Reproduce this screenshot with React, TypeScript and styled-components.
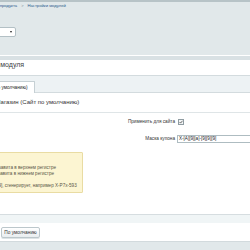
import React from 'react';
import styled, { createGlobalStyle } from 'styled-components';

const GlobalStyle = createGlobalStyle`
  html, body {
    margin: 0;
    padding: 0;
    background: #ffffff;
    overflow: hidden;
  }
  body {
    font-family: "Liberation Sans", Arial, sans-serif;
    color: #333333;
  }
`;

const Page = styled.div`
  width: 250px;
  height: 250px;
  overflow: hidden;
  display: flex;
  flex-direction: column;
`;

const Header = styled.div`
  height: 56px;
  box-sizing: border-box;
  border-top: 2px solid #b7c3c7;
  border-bottom: 1px solid #ffffff;
  background: #e1e8ea;
  padding-top: 1px;
  display: flex;
  flex-direction: column;
`;

const HeaderEdge = styled.div`
  height: 4px;
  background: #d9e1e4;
`;

const Breadcrumbs = styled.div<{ $shift: number }>`
  margin-left: ${(p) => -p.$shift}px;
  display: flex;
  align-items: center;
  gap: 4px;
  font-size: 4.2px;
  line-height: 6px;
  white-space: nowrap;
  color: #2f5d8e;
`;

const Crumb = styled.span``;

const CrumbSep = styled.span`
  color: #7d8d96;
  font-size: 4px;
`;

const ModuleSelect = styled.div`
  margin-top: 18px;
  margin-left: -30px;
  width: 46px;
  height: 10px;
  box-sizing: border-box;
  background: #ffffff;
  border: 1px solid #b3c0c5;
  border-radius: 2px;
  display: flex;
  align-items: center;
  justify-content: flex-end;
  padding-right: 3px;
`;

const Arrow = styled.span`
  width: 0;
  height: 0;
  border-left: 1.5px solid transparent;
  border-right: 1.5px solid transparent;
  border-top: 2px solid #222;
`;

const TitleBar = styled.div<{ $shift: number }>`
  height: 15px;
  margin-left: ${(p) => -p.$shift}px;
  font-size: 7px;
  line-height: 9px;
  color: #3d4246;
  white-space: nowrap;
`;

const TabsBand = styled.div`
  height: 18px;
  box-sizing: border-box;
  border-top: 1px solid #d3dbde;
  border-bottom: 1px solid #d3dbde;
  background: #edf2f4;
  display: flex;
  align-items: flex-end;
`;

const Tab = styled.div<{ $shift: number }>`
  margin-left: ${(p) => -p.$shift}px;
  margin-bottom: -1px;
  width: 80px;
  height: 12px;
  box-sizing: border-box;
  background: #ffffff;
  border: 1px solid #c6d0d4;
  border-bottom: none;
  border-radius: 1px 1px 0 0;
  padding-left: 6px;
  font-size: 4.7px;
  line-height: 11px;
  white-space: nowrap;
  color: #222;
`;

const SectionHeading = styled.div<{ $shift: number }>`
  height: 20px;
  box-sizing: border-box;
  border-bottom: 1px solid #dfe5e7;
  font-size: 6px;
  line-height: 19px;
  white-space: nowrap;
  color: #333;
  text-indent: ${(p) => -p.$shift}px;
`;

const FormGrid = styled.div`
  display: grid;
  grid-template-columns: 175px 1fr;
  grid-auto-rows: 17px;
  column-gap: 2px;
  align-items: center;
`;

const Label = styled.div`
  text-align: right;
  font-size: 4.7px;
  color: #333;
  white-space: nowrap;
`;

const Field = styled.div`
  display: flex;
  align-items: center;
`;

const Check = styled.span`
  width: 6px;
  height: 6px;
  margin-left: 1px;
  box-sizing: border-box;
  border: 1px solid #8f9ca2;
  background: #f4f6f7;
  display: flex;
  align-items: center;
  justify-content: center;
`;

const TextInput = styled.div`
  width: 90px;
  height: 8px;
  box-sizing: border-box;
  border: 1px solid #aebcc1;
  background: #ffffff;
  padding-left: 1px;
  font-size: 4.6px;
  line-height: 6px;
  color: #222;
  white-space: nowrap;
`;

const Note = styled.div<{ $shift: number }>`
  margin-top: 5px;
  margin-left: ${(p) => -p.$shift}px;
  width: 121px;
  height: 41px;
  box-sizing: border-box;
  padding: 6px 0 0 6px;
  background: #fcf5d2;
  border: 1px solid #e9dca3;
  border-radius: 1px;
  font-size: 4.6px;
  line-height: 6px;
  color: #5a5548;
  white-space: nowrap;
`;

const NoteLine = styled.div<{ $indent?: number }>`
  height: 6px;
  margin-left: ${(p) => p.$indent ?? 0}px;
`;

const FooterBand = styled.div`
  margin-top: 21px;
  height: 8px;
  border-top: 1px solid #d6dde0;
  background: #f0f5f6;
`;

const ButtonRow = styled.div`
  height: 18px;
  display: flex;
  align-items: flex-start;
  padding-top: 4px;
  box-sizing: border-box;
  padding-left: 1px;
`;

const Button = styled.button`
  width: 39px;
  height: 11px;
  padding: 0;
  box-sizing: border-box;
  border: 1px solid #bcc7cb;
  border-radius: 2px;
  background: linear-gradient(#ffffff, #e8edef);
  box-shadow: 0 1px 0 #dde3e5;
  font-family: "Liberation Sans", Arial, sans-serif;
  font-size: 4.8px;
  color: #333;
`;

const BottomBand = styled.div`
  flex: 1;
  border-top: 1px solid #d2dadd;
  background: #e1e8ea;
`;

export default function App() {
  return (
    <Page>
      <GlobalStyle />
      <Header>
        <Breadcrumbs $shift={22}>
          <Crumb>Настройки продукта</Crumb>
          <CrumbSep>&gt;</CrumbSep>
          <Crumb>Настройки модулей</Crumb>
        </Breadcrumbs>
        <ModuleSelect>
          <Arrow />
        </ModuleSelect>
      </Header>
      <HeaderEdge />
      <TitleBar $shift={36}>Настройки модуля</TitleBar>
      <TabsBand>
        <Tab $shift={45}>Магазин (Сайт по умолчанию)</Tab>
      </TabsBand>
      <SectionHeading $shift={4.5}>Магазин (Сайт по умолчанию)</SectionHeading>
      <FormGrid>
        <Label>Применить для сайта</Label>
        <Field>
          <Check>
            <svg width="4" height="4" viewBox="0 0 4 4">
              <path d="M0.5 2 L1.6 3.1 L3.5 0.8" fill="none" stroke="#333" strokeWidth="0.7" />
            </svg>
          </Check>
        </Field>
        <Label>Маска купона</Label>
        <Field>
          <TextInput>X-[A][9][a]-[9][9][9]</TextInput>
        </Field>
      </FormGrid>
      <Note $shift={38}>
        <NoteLine>[9] - цифра</NoteLine>
        <NoteLine>[A] - буква алфавита в верхнем регистре</NoteLine>
        <NoteLine>[a] - буква алфавита в нижнем регистре</NoteLine>
        <NoteLine />
        <NoteLine $indent={-4}>X-[A][9][a]-[9][9][9], сгенерирует, например X-P7x-593</NoteLine>
      </Note>
      <FooterBand />
      <ButtonRow>
        <Button>По умолчанию</Button>
      </ButtonRow>
      <BottomBand />
    </Page>
  );
}
